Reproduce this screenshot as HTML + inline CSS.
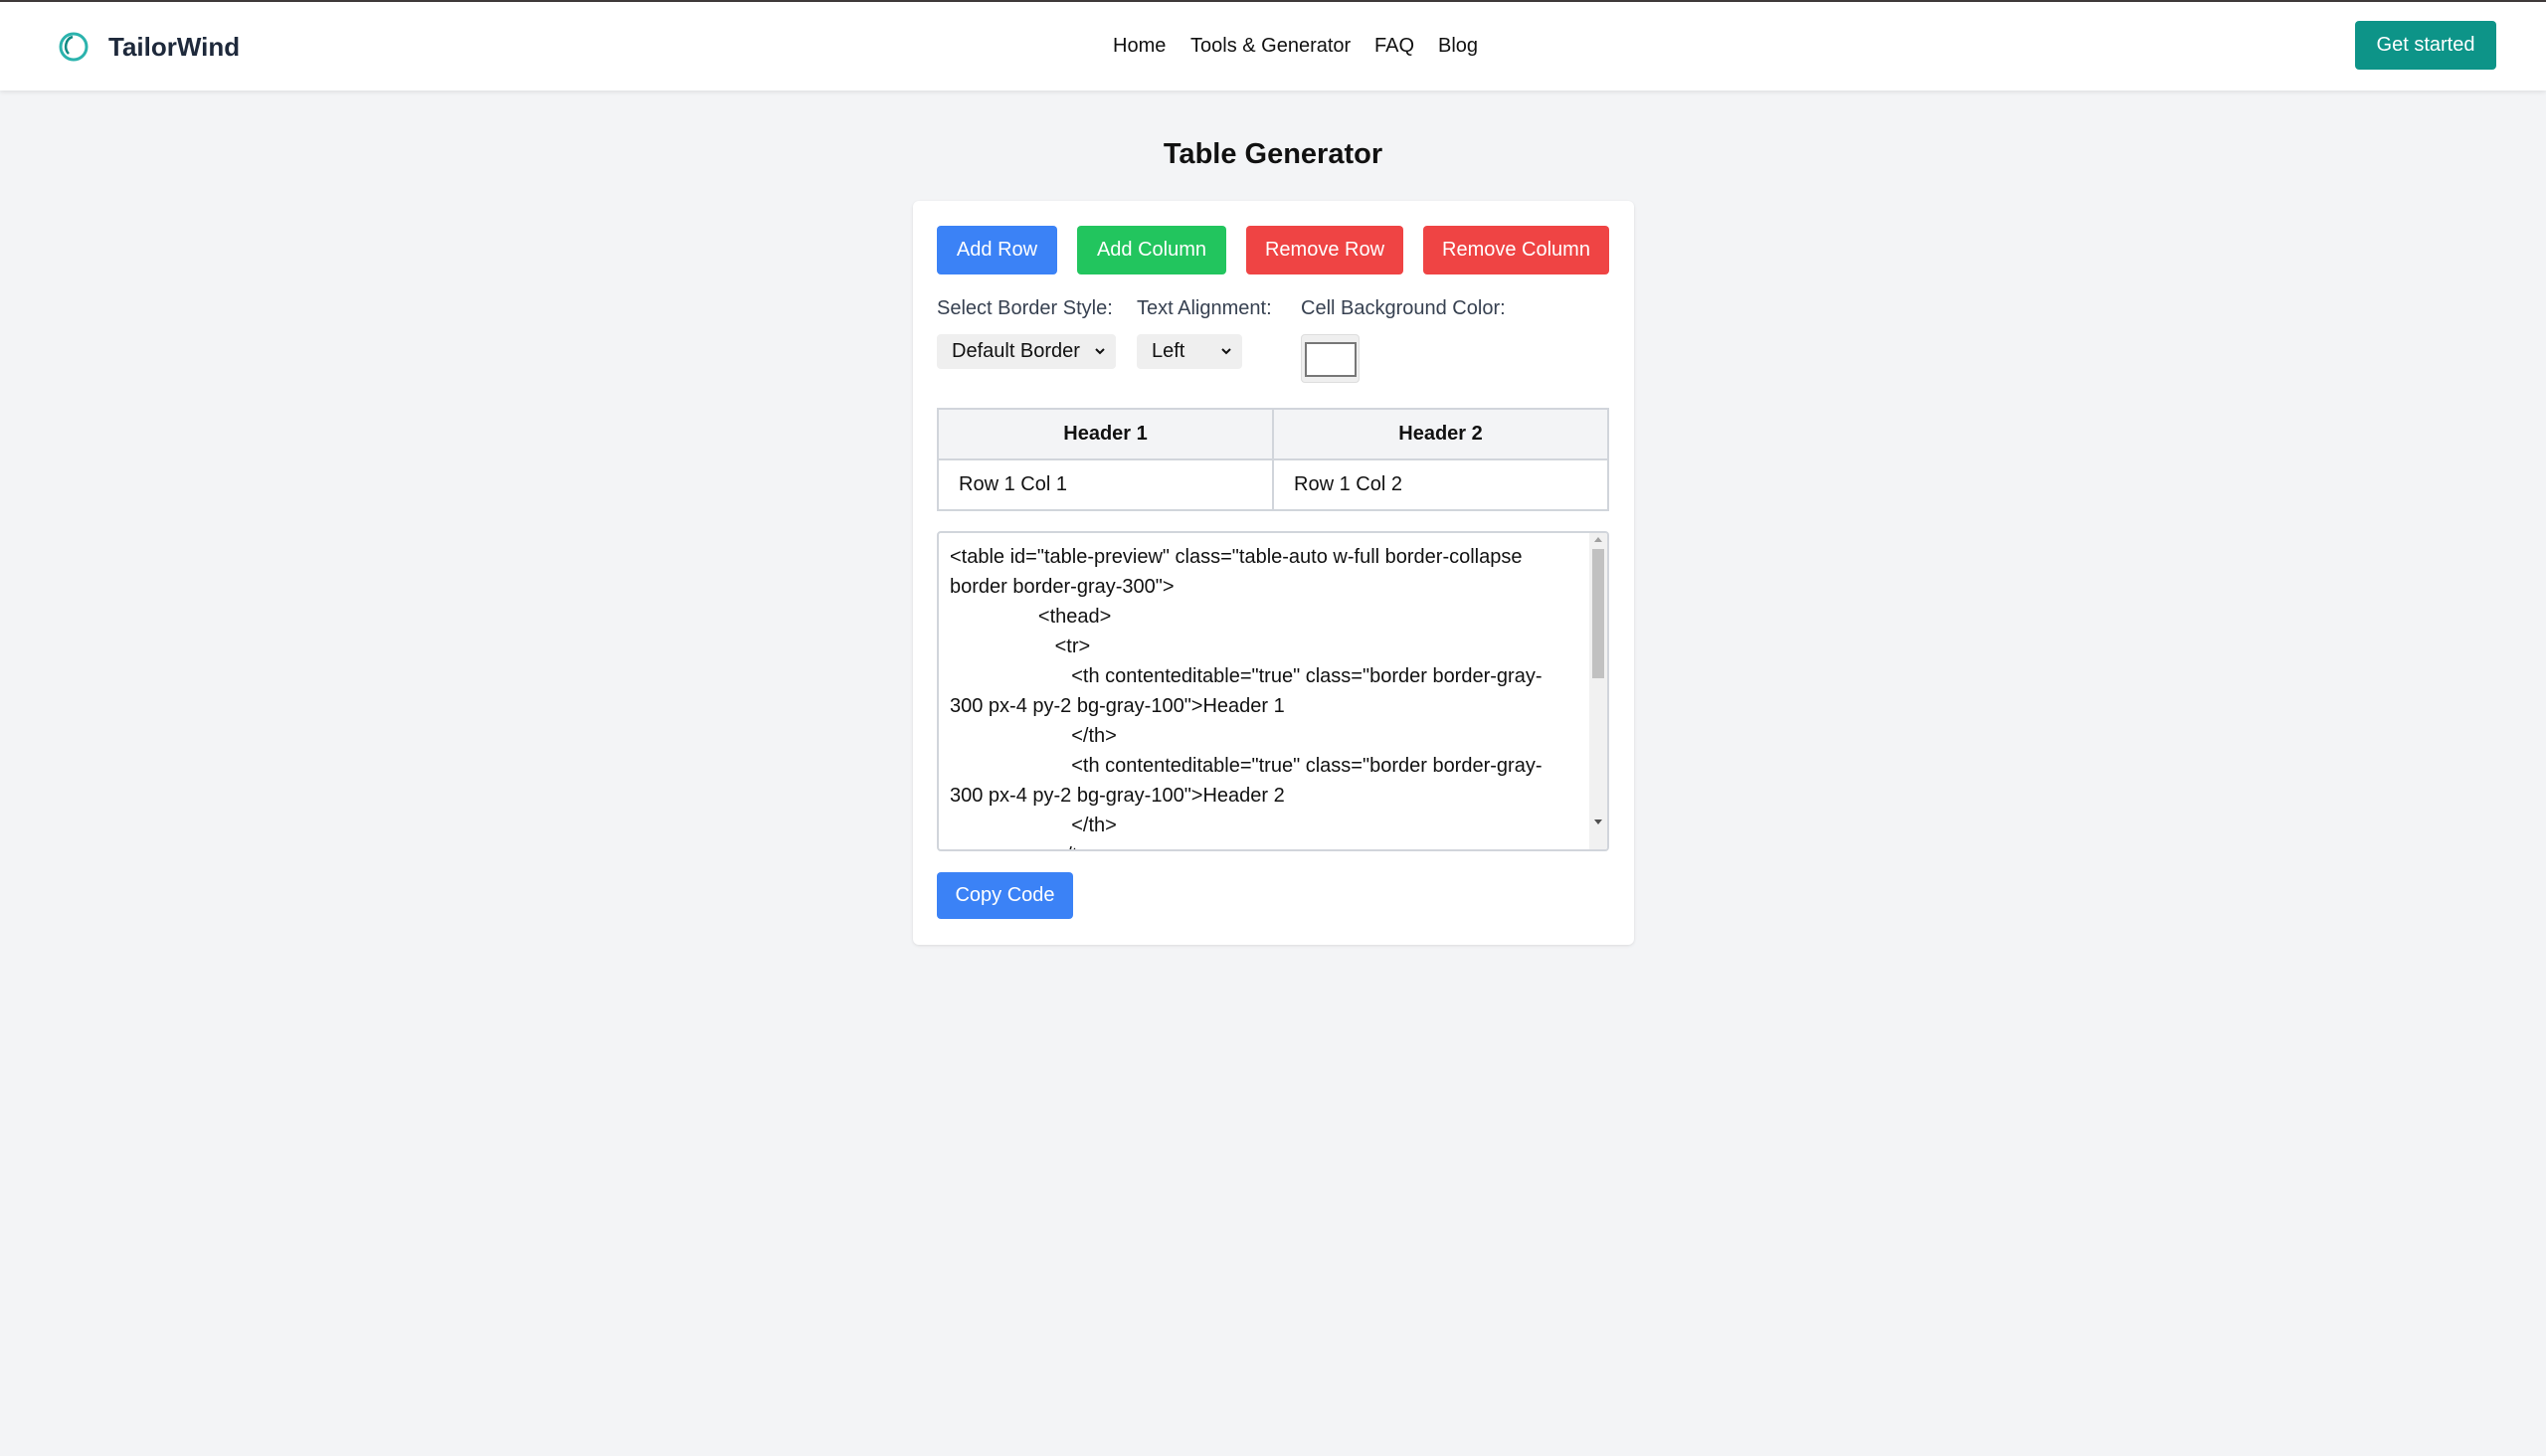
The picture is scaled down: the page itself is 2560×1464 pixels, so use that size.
<!DOCTYPE html>
<html><head><meta charset="utf-8"><style>
*{box-sizing:border-box;margin:0;padding:0}
body{width:2560px;height:1464px;background:#f3f4f6;font-family:"Liberation Sans",sans-serif;color:#1f2937;position:relative;overflow:hidden}
.abs{position:absolute}
.nav{left:0;top:0;width:2560px;height:91px;background:#fff;border-top:2px solid #3f3a3a;box-shadow:0 2px 4px rgba(0,0,0,.08)}
.btn{position:absolute;color:#fff;font-size:20px;display:flex;align-items:center;justify-content:center;border-radius:4px}
.lbl{position:absolute;top:299px;font-size:20px;color:#374151}
.sel{position:absolute;top:336px;height:35px;background:#efefef;border-radius:4px;font-size:20px;color:#111;padding-left:15px;line-height:35px}
.sel svg{position:absolute;right:10px;top:13px}
table{position:absolute;left:942px;top:410px;width:676px;border-collapse:collapse;font-size:20px}
td,th{border:2px solid #d1d5db;height:51px}
th{background:#f3f4f6;font-weight:bold;color:#111}
td{padding-left:20px;color:#111}
.ta{left:942px;top:534px;width:676px;height:322px;border:2px solid #d1d5db;border-radius:4px;background:#fff;overflow:hidden}
.code{position:absolute;left:11px;top:9px;font-size:20px;line-height:30px;white-space:pre;color:#111}
</style></head><body>
<div class="abs nav">
  <svg class="abs" style="left:57px;top:28px" width="34" height="34" viewBox="0 0 34 34"><circle cx="17" cy="17" r="13" fill="none" stroke="#2bb3ad" stroke-width="3"/><path d="M12 24 A9 10 0 0 1 16 7" fill="none" stroke="#0f8a83" stroke-width="2.5"/></svg>
  <div class="abs" style="left:109px;top:30px;font-size:26px;font-weight:bold;color:#1e293b">TailorWind</div>
  <div class="abs" style="left:1119px;top:33px;font-size:20px;color:#111">Home</div>
  <div class="abs" style="left:1197px;top:33px;font-size:20px;color:#111">Tools &amp; Generator</div>
  <div class="abs" style="left:1382px;top:33px;font-size:20px;color:#111">FAQ</div>
  <div class="abs" style="left:1446px;top:33px;font-size:20px;color:#111">Blog</div>
  <div class="btn" style="left:2368px;top:19px;width:142px;height:49px;background:#0d9488">Get started</div>
</div>
<div class="abs" style="left:0;width:2560px;top:139px;text-align:center;font-size:29px;font-weight:bold;color:#111">Table Generator</div>
<div class="abs" style="left:918px;top:202px;width:725px;height:748px;background:#fff;border-radius:6px;box-shadow:0 1px 3px rgba(0,0,0,.1)"></div>
<div class="btn" style="left:942px;top:227px;width:121px;height:49px;background:#3b82f6">Add Row</div>
<div class="btn" style="left:1083px;top:227px;width:150px;height:49px;background:#22c55e">Add Column</div>
<div class="btn" style="left:1253px;top:227px;width:158px;height:49px;background:#ef4444">Remove Row</div>
<div class="btn" style="left:1431px;top:227px;width:187px;height:49px;background:#ef4444">Remove Column</div>
<div class="lbl" style="left:942px">Select Border Style:</div>
<div class="lbl" style="left:1143px">Text Alignment:</div>
<div class="lbl" style="left:1308px">Cell Background Color:</div>
<div class="sel" style="left:942px;width:180px">Default Border<svg width="12" height="9" viewBox="0 0 12 9"><path d="M2 2l4 4 4-4" fill="none" stroke="#111" stroke-width="2"/></svg></div>
<div class="sel" style="left:1143px;width:106px">Left<svg width="12" height="9" viewBox="0 0 12 9"><path d="M2 2l4 4 4-4" fill="none" stroke="#111" stroke-width="2"/></svg></div>
<div class="abs" style="left:1308px;top:336px;width:59px;height:49px;background:#efefef;border-radius:4px;border:1px solid #ddd"></div>
<div class="abs" style="left:1312px;top:344px;width:52px;height:35px;background:#fff;border:2px solid #777"></div>
<table><tr><th>Header 1</th><th>Header 2</th></tr><tr><td>Row 1 Col 1</td><td>Row 1 Col 2</td></tr></table>
<div class="abs ta"><div class="code">&lt;table id="table-preview" class="table-auto w-full border-collapse
border border-gray-300"&gt;
                &lt;thead&gt;
                   &lt;tr&gt;
                      &lt;th contenteditable="true" class="border border-gray-
300 px-4 py-2 bg-gray-100"&gt;Header 1
                      &lt;/th&gt;
                      &lt;th contenteditable="true" class="border border-gray-
300 px-4 py-2 bg-gray-100"&gt;Header 2
                      &lt;/th&gt;
                   &lt;/tr&gt;</div>
  <div class="abs" style="right:0;top:0;width:18px;height:318px;background:#f1f1f1"></div>
  <div class="abs" style="right:3px;top:16px;width:12px;height:130px;background:#c1c1c1"></div>
  <div class="abs" style="right:5px;top:4px;width:0;height:0;border:4px solid transparent;border-bottom:5px solid #a0a0a0;border-top:0"></div>
  <div class="abs" style="right:5px;top:288px;width:0;height:0;border:4px solid transparent;border-top:5px solid #505050;border-bottom:0"></div>
</div>
<div class="btn" style="left:942px;top:877px;width:137px;height:47px;background:#3b82f6">Copy Code</div>
</body></html>
